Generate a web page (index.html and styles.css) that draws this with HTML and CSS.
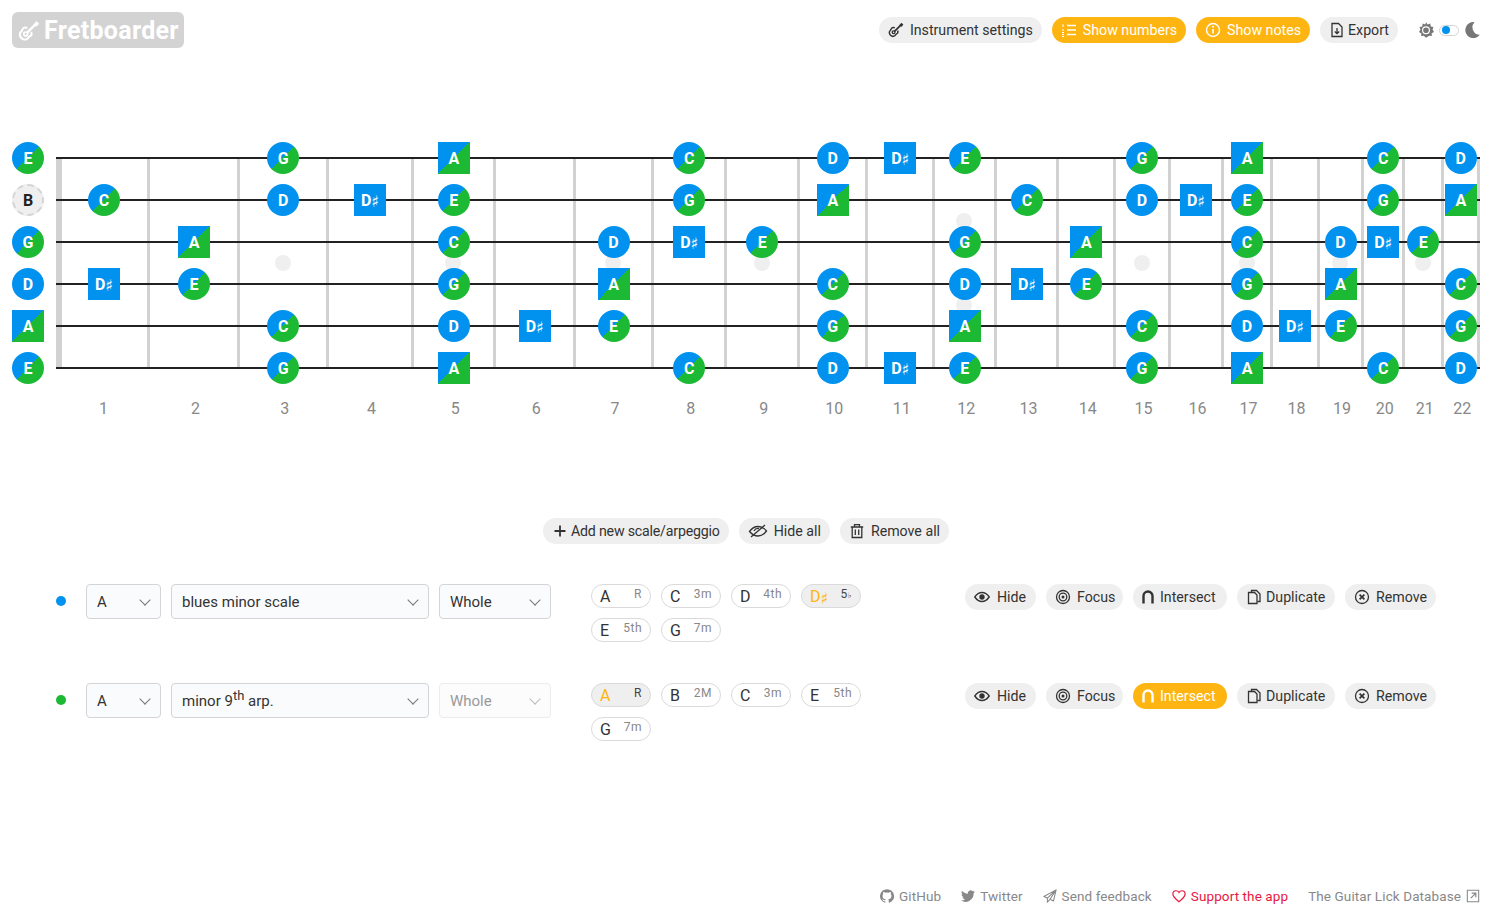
FILE: index.html
```html
<!DOCTYPE html>
<html lang="en">
<head>
    <meta charset="UTF-8">
    <meta name="viewport" content="width=device-width, initial-scale=1.0">
    <title>Fretboarder</title>
    <link rel="stylesheet" href="styles.css">
</head>

<body>
    <!-- Icon sprite -->
    <svg class="sprite" xmlns="http://www.w3.org/2000/svg">
        <symbol id="i-guitar" viewBox="0 0 16 16">
            <path d="M6.800 5.800C5.300 5.200 3.700 5.700 3.100 7c-.3.6-.2 1.100-.8 1.500C1 9.500 1 11.500 2.300 12.900c1.400 1.500 3.400 1.800 4.700.6.500-.5.600-1.100 1.300-1.400 1.300-.6 1.900-2.100 1.300-3.500" fill="none" stroke="currentColor" stroke-width="1.500"/>
            <circle cx="5.600" cy="10.200" r="1.400" fill="none" stroke="currentColor" stroke-width="1.300"/>
            <path d="M6.500 9.400l6-6" stroke="currentColor" stroke-width="1.700"/>
            <path d="M11.300 3l2.200-2.200 1.900 1.900-2.200 2.200z" fill="currentColor"/>
        </symbol>
        <symbol id="i-list" viewBox="0 0 16 16">
            <path d="M6 3.500h9M6 8h9M6 12.500h9" stroke="currentColor" stroke-width="1.300" fill="none"/>
            <path d="M2 2v3M1 8h2M1 10.500h2M1 12.500h2M1 14.500h2" stroke="currentColor" stroke-width="1" fill="none"/>
        </symbol>
        <symbol id="i-info" viewBox="0 0 16 16">
            <circle cx="8" cy="8" r="6.500" fill="none" stroke="currentColor" stroke-width="1.400"/>
            <path d="M8 7v4.500" stroke="currentColor" stroke-width="1.600"/>
            <circle cx="8" cy="4.800" r="1" fill="currentColor"/>
        </symbol>
        <symbol id="i-export" viewBox="0 0 16 16">
            <path d="M3 1.500h6.500l3.500 3.500v9.500H3z" fill="none" stroke="currentColor" stroke-width="1.300"/>
            <path d="M8 6v5.500M5.800 9.500L8 11.700l2.200-2.200" fill="none" stroke="currentColor" stroke-width="1.300"/>
        </symbol>
        <symbol id="i-sun" viewBox="0 0 16 16">
            <path d="M8 .2l1.700 2.300 2.700-.9.300 2.800 2.800.5-1 2.600L16 10l-2.400 1.300.3 2.700-2.700-.3L8 15.800l-2.200-2-2.700.3.300-2.700L1 10l1.500-2.500-1-2.600 2.800-.5.300-2.800 2.700.9z" fill="currentColor"/>
            <circle cx="8" cy="8.200" r="4" fill="#fff"/>
            <circle cx="8" cy="8.200" r="2.800" fill="currentColor"/>
        </symbol>
        <symbol id="i-moon" viewBox="0 0 16 16">
            <path d="M10.500.2A8 8 0 1 0 15.800 12.800 7.500 7.500 0 0 1 10.500.2z" fill="currentColor"/>
        </symbol>
        <symbol id="i-plus" viewBox="0 0 16 16">
            <path d="M8 2.500v11M2.500 8h11" stroke="currentColor" stroke-width="1.800" fill="none"/>
        </symbol>
        <symbol id="i-eye-off" viewBox="0 0 20 16">
            <path d="M1.500 8.500C4 5 7 3.500 10 3.500s6 1.500 8.500 4.500C16 11.500 13 13 10 13s-6-1.500-8.500-4.500z" fill="none" stroke="currentColor" stroke-width="1.300"/>
            <path d="M6 8c1-2 3-3 5-2.500M3 14L17 2" fill="none" stroke="currentColor" stroke-width="1.300"/>
        </symbol>
        <symbol id="i-trash" viewBox="0 0 16 16">
            <path d="M1.800 4h12.400M5.500 4V1.700h5V4M3.200 4v10.500h9.600V4M6.300 6.500v5.500M9.700 6.500v5.500" fill="none" stroke="currentColor" stroke-width="1.300"/>
        </symbol>
        <symbol id="i-eye" viewBox="0 0 16 16">
            <path d="M.8 8C2.800 5 5.300 3.500 8 3.500s5.200 1.500 7.200 4.500c-2 3-4.500 4.500-7.200 4.500S2.800 11 .8 8z" fill="none" stroke="currentColor" stroke-width="1.400"/>
            <circle cx="8" cy="8" r="2.700" fill="currentColor"/>
        </symbol>
        <symbol id="i-focus" viewBox="0 0 16 16">
            <circle cx="8" cy="8" r="6.500" fill="none" stroke="currentColor" stroke-width="1.300"/>
            <circle cx="8" cy="8" r="3.800" fill="none" stroke="currentColor" stroke-width="1.300"/>
            <circle cx="8" cy="8" r="1.500" fill="currentColor"/>
        </symbol>
        <symbol id="i-intersect" viewBox="0 0 16 16">
            <path d="M3.500 14.500V7a4.500 4.500 0 0 1 9 0v7.500" fill="none" stroke="currentColor" stroke-width="2.400"/>
        </symbol>
        <symbol id="i-duplicate" viewBox="0 0 16 16">
            <path d="M5.500 3.500V1.500h5l3.500 3.500v7.500h-2.500" fill="none" stroke="currentColor" stroke-width="1.300"/>
            <path d="M2.500 3.500h6l2.500 2.500v8.500H2.500z" fill="none" stroke="currentColor" stroke-width="1.300"/>
        </symbol>
        <symbol id="i-remove" viewBox="0 0 16 16">
            <circle cx="8" cy="8" r="6.500" fill="none" stroke="currentColor" stroke-width="1.300"/>
            <path d="M5.600 5.600l4.800 4.800M10.400 5.600l-4.800 4.800" stroke="currentColor" stroke-width="1.700"/>
        </symbol>
        <symbol id="i-github" viewBox="0 0 16 16">
            <path d="M8 .2a8 8 0 0 0-2.500 15.600c.4.100.5-.2.500-.4v-1.400c-2.200.5-2.700-1-2.700-1-.4-.9-.9-1.200-.9-1.200-.7-.5.100-.5.100-.5.800.1 1.200.8 1.200.8.700 1.200 1.900.9 2.300.7.100-.5.300-.9.500-1.100-1.800-.2-3.600-.9-3.600-4 0-.9.300-1.600.8-2.100-.1-.2-.4-1 .1-2.100 0 0 .7-.2 2.200.8a7.600 7.600 0 0 1 4 0c1.500-1 2.200-.8 2.200-.8.400 1.100.200 1.900.1 2.100.500.500.8 1.200.8 2.100 0 3.100-1.900 3.800-3.700 4 .3.300.6.700.6 1.500v2.200c0 .2.100.5.600.4A8 8 0 0 0 8 .2z" fill="currentColor"/>
        </symbol>
        <symbol id="i-twitter" viewBox="0 0 16 16">
            <path d="M16 3c-.6.300-1.200.4-1.900.5.700-.4 1.200-1 1.400-1.800-.6.400-1.300.6-2.100.8a3.300 3.300 0 0 0-5.600 3C5.100 5.400 2.700 4.100 1.100 2.100c-.9 1.500-.4 3.400 1 4.400-.5 0-1-.2-1.500-.4 0 1.600 1.100 3 2.600 3.300-.5.100-1 .2-1.500.1.400 1.300 1.600 2.200 3 2.300A6.600 6.600 0 0 1 0 13.100 9.300 9.300 0 0 0 14.400 4.800c.6-.5 1.200-1.100 1.600-1.800z" fill="currentColor"/>
        </symbol>
        <symbol id="i-send" viewBox="0 0 16 16">
            <path d="M15 1L1 8.500l4 1.800L15 1l-7 10.800 4 1.900zM5 10.300v4.700l3-3.200" fill="none" stroke="currentColor" stroke-width="1.200" stroke-linejoin="round"/>
        </symbol>
        <symbol id="i-heart" viewBox="0 0 16 16">
            <path d="M8 14.500C3.500 11 1 8.500 1 5.700 1 3.500 2.700 2 4.600 2 6 2 7.300 2.800 8 4c.7-1.200 2-2 3.400-2C13.300 2 15 3.500 15 5.700c0 2.800-2.500 5.300-7 8.800z" fill="none" stroke="currentColor" stroke-width="1.400"/>
        </symbol>
        <symbol id="i-external" viewBox="0 0 16 16">
            <path d="M1.500 1.500h13v13h-13z" fill="none" stroke="currentColor" stroke-width="1.200"/>
            <path d="M5.500 10.500l5.500-5.500M6.500 4.800h4.700v4.700" fill="none" stroke="currentColor" stroke-width="1.400"/>
        </symbol>
    </svg>

    <header class="top-bar">
        <a class="logo" href="#"><svg class="logo-icon"><use href="#i-guitar"></use></svg>Fretboarder</a>
        <nav class="top-actions">
            <button class="pill"><svg class="icon"><use href="#i-guitar"></use></svg>Instrument settings</button>
            <button class="pill on"><svg class="icon"><use href="#i-list"></use></svg>Show numbers</button>
            <button class="pill on"><svg class="icon"><use href="#i-info"></use></svg>Show notes</button>
            <button class="pill export"><svg class="icon"><use href="#i-export"></use></svg>Export</button>
            <div class="theme-switch">
                <svg class="icon"><use href="#i-sun"></use></svg>
                <span class="toggle"><span class="knob"></span></span>
                <svg class="icon"><use href="#i-moon"></use></svg>
            </div>
        </nav>
    </header>

    <main>
        <!-- Fretboard -->
        <section class="fretboard">
            <div class="frets">
                <div class="fret nut"></div>
                <div class="fret"></div>
                <div class="fret"><i class="dot"></i></div>
                <div class="fret"></div>
                <div class="fret"><i class="dot"></i></div>
                <div class="fret"></div>
                <div class="fret"><i class="dot"></i></div>
                <div class="fret"></div>
                <div class="fret"><i class="dot"></i></div>
                <div class="fret"></div>
                <div class="fret"></div>
                <div class="fret double"><i class="dot"></i><i class="dot"></i></div>
                <div class="fret"></div>
                <div class="fret"></div>
                <div class="fret"><i class="dot"></i></div>
                <div class="fret"></div>
                <div class="fret"><i class="dot"></i></div>
                <div class="fret"></div>
                <div class="fret"><i class="dot"></i></div>
                <div class="fret"></div>
                <div class="fret"><i class="dot"></i></div>
                <div class="fret"></div>
            </div>

            <div class="string">
                <div class="cell"><span class="note both">E</span></div>
                <div class="cell"></div><div class="cell"></div>
                <div class="cell"><span class="note both">G</span></div>
                <div class="cell"></div>
                <div class="cell"><span class="note both root">A</span></div>
                <div class="cell"></div><div class="cell"></div>
                <div class="cell"><span class="note both">C</span></div>
                <div class="cell"></div>
                <div class="cell"><span class="note">D</span></div>
                <div class="cell"><span class="note root">D<b class="sharp">♯</b></span></div>
                <div class="cell"><span class="note both">E</span></div>
                <div class="cell"></div><div class="cell"></div>
                <div class="cell"><span class="note both">G</span></div>
                <div class="cell"></div>
                <div class="cell"><span class="note both root">A</span></div>
                <div class="cell"></div><div class="cell"></div>
                <div class="cell"><span class="note both">C</span></div>
                <div class="cell"></div>
                <div class="cell"><span class="note">D</span></div>
            </div>
            <div class="string">
                <div class="cell"><span class="note muted">B</span></div>
                <div class="cell"><span class="note both">C</span></div>
                <div class="cell"></div>
                <div class="cell"><span class="note">D</span></div>
                <div class="cell"><span class="note root">D<b class="sharp">♯</b></span></div>
                <div class="cell"><span class="note both">E</span></div>
                <div class="cell"></div><div class="cell"></div>
                <div class="cell"><span class="note both">G</span></div>
                <div class="cell"></div>
                <div class="cell"><span class="note both root">A</span></div>
                <div class="cell"></div><div class="cell"></div>
                <div class="cell"><span class="note both">C</span></div>
                <div class="cell"></div>
                <div class="cell"><span class="note">D</span></div>
                <div class="cell"><span class="note root">D<b class="sharp">♯</b></span></div>
                <div class="cell"><span class="note both">E</span></div>
                <div class="cell"></div><div class="cell"></div>
                <div class="cell"><span class="note both">G</span></div>
                <div class="cell"></div>
                <div class="cell"><span class="note both root">A</span></div>
            </div>
            <div class="string">
                <div class="cell"><span class="note both">G</span></div>
                <div class="cell"></div>
                <div class="cell"><span class="note both root">A</span></div>
                <div class="cell"></div><div class="cell"></div>
                <div class="cell"><span class="note both">C</span></div>
                <div class="cell"></div>
                <div class="cell"><span class="note">D</span></div>
                <div class="cell"><span class="note root">D<b class="sharp">♯</b></span></div>
                <div class="cell"><span class="note both">E</span></div>
                <div class="cell"></div><div class="cell"></div>
                <div class="cell"><span class="note both">G</span></div>
                <div class="cell"></div>
                <div class="cell"><span class="note both root">A</span></div>
                <div class="cell"></div><div class="cell"></div>
                <div class="cell"><span class="note both">C</span></div>
                <div class="cell"></div>
                <div class="cell"><span class="note">D</span></div>
                <div class="cell"><span class="note root">D<b class="sharp">♯</b></span></div>
                <div class="cell"><span class="note both">E</span></div>
                <div class="cell"></div>
            </div>
            <div class="string">
                <div class="cell"><span class="note">D</span></div>
                <div class="cell"><span class="note root">D<b class="sharp">♯</b></span></div>
                <div class="cell"><span class="note both">E</span></div>
                <div class="cell"></div><div class="cell"></div>
                <div class="cell"><span class="note both">G</span></div>
                <div class="cell"></div>
                <div class="cell"><span class="note both root">A</span></div>
                <div class="cell"></div><div class="cell"></div>
                <div class="cell"><span class="note both">C</span></div>
                <div class="cell"></div>
                <div class="cell"><span class="note">D</span></div>
                <div class="cell"><span class="note root">D<b class="sharp">♯</b></span></div>
                <div class="cell"><span class="note both">E</span></div>
                <div class="cell"></div><div class="cell"></div>
                <div class="cell"><span class="note both">G</span></div>
                <div class="cell"></div>
                <div class="cell"><span class="note both root">A</span></div>
                <div class="cell"></div><div class="cell"></div>
                <div class="cell"><span class="note both">C</span></div>
            </div>
            <div class="string">
                <div class="cell"><span class="note both root">A</span></div>
                <div class="cell"></div><div class="cell"></div>
                <div class="cell"><span class="note both">C</span></div>
                <div class="cell"></div>
                <div class="cell"><span class="note">D</span></div>
                <div class="cell"><span class="note root">D<b class="sharp">♯</b></span></div>
                <div class="cell"><span class="note both">E</span></div>
                <div class="cell"></div><div class="cell"></div>
                <div class="cell"><span class="note both">G</span></div>
                <div class="cell"></div>
                <div class="cell"><span class="note both root">A</span></div>
                <div class="cell"></div><div class="cell"></div>
                <div class="cell"><span class="note both">C</span></div>
                <div class="cell"></div>
                <div class="cell"><span class="note">D</span></div>
                <div class="cell"><span class="note root">D<b class="sharp">♯</b></span></div>
                <div class="cell"><span class="note both">E</span></div>
                <div class="cell"></div><div class="cell"></div>
                <div class="cell"><span class="note both">G</span></div>
            </div>
            <div class="string">
                <div class="cell"><span class="note both">E</span></div>
                <div class="cell"></div><div class="cell"></div>
                <div class="cell"><span class="note both">G</span></div>
                <div class="cell"></div>
                <div class="cell"><span class="note both root">A</span></div>
                <div class="cell"></div><div class="cell"></div>
                <div class="cell"><span class="note both">C</span></div>
                <div class="cell"></div>
                <div class="cell"><span class="note">D</span></div>
                <div class="cell"><span class="note root">D<b class="sharp">♯</b></span></div>
                <div class="cell"><span class="note both">E</span></div>
                <div class="cell"></div><div class="cell"></div>
                <div class="cell"><span class="note both">G</span></div>
                <div class="cell"></div>
                <div class="cell"><span class="note both root">A</span></div>
                <div class="cell"></div><div class="cell"></div>
                <div class="cell"><span class="note both">C</span></div>
                <div class="cell"></div>
                <div class="cell"><span class="note">D</span></div>
            </div>

            <div class="fret-numbers">
                <span></span><span>1</span><span>2</span><span>3</span><span>4</span><span>5</span><span>6</span><span>7</span><span>8</span><span>9</span><span>10</span><span>11</span><span>12</span><span>13</span><span>14</span><span>15</span><span>16</span><span>17</span><span>18</span><span>19</span><span>20</span><span>21</span><span>22</span>
            </div>
        </section>

        <!-- Scale controls -->
        <section class="scale-actions">
            <button class="pill add-new"><svg class="icon"><use href="#i-plus"></use></svg>Add new scale/arpeggio</button>
            <button class="pill"><svg class="icon wide"><use href="#i-eye-off"></use></svg>Hide all</button>
            <button class="pill"><svg class="icon"><use href="#i-trash"></use></svg>Remove all</button>
        </section>

        <section class="scales">
            <div class="scale">
                <span class="scale-dot"></span>
                <div class="select root-select"><span>A</span><i class="chevron"></i></div>
                <div class="select type-select"><span>blues minor scale</span><i class="chevron"></i></div>
                <div class="select pos-select"><span>Whole</span><i class="chevron"></i></div>
                <div class="intervals">
                    <div class="interval"><span class="name">A</span><span class="degree">R</span></div>
                    <div class="interval"><span class="name">C</span><span class="degree">3m</span></div>
                    <div class="interval"><span class="name">D</span><span class="degree">4th</span></div>
                    <div class="interval active"><span class="name">D<b class="sharp">♯</b></span><span class="degree">5<b class="flat">♭</b></span></div>
                    <div class="interval"><span class="name">E</span><span class="degree">5th</span></div>
                    <div class="interval"><span class="name">G</span><span class="degree">7m</span></div>
                </div>
                <div class="scale-buttons">
                    <button class="pill"><svg class="icon"><use href="#i-eye"></use></svg>Hide</button>
                    <button class="pill"><svg class="icon"><use href="#i-focus"></use></svg>Focus</button>
                    <button class="pill"><svg class="icon"><use href="#i-intersect"></use></svg>Intersect</button>
                    <button class="pill"><svg class="icon"><use href="#i-duplicate"></use></svg>Duplicate</button>
                    <button class="pill"><svg class="icon"><use href="#i-remove"></use></svg>Remove</button>
                </div>
            </div>

            <div class="scale">
                <span class="scale-dot green"></span>
                <div class="select root-select"><span>A</span><i class="chevron"></i></div>
                <div class="select type-select"><span>minor 9<sup>th</sup> arp.</span><i class="chevron"></i></div>
                <div class="select pos-select disabled"><span>Whole</span><i class="chevron"></i></div>
                <div class="intervals">
                    <div class="interval active"><span class="name">A</span><span class="degree">R</span></div>
                    <div class="interval"><span class="name">B</span><span class="degree">2M</span></div>
                    <div class="interval"><span class="name">C</span><span class="degree">3m</span></div>
                    <div class="interval"><span class="name">E</span><span class="degree">5th</span></div>
                    <div class="interval"><span class="name">G</span><span class="degree">7m</span></div>
                </div>
                <div class="scale-buttons">
                    <button class="pill"><svg class="icon"><use href="#i-eye"></use></svg>Hide</button>
                    <button class="pill"><svg class="icon"><use href="#i-focus"></use></svg>Focus</button>
                    <button class="pill on"><svg class="icon"><use href="#i-intersect"></use></svg>Intersect</button>
                    <button class="pill"><svg class="icon"><use href="#i-duplicate"></use></svg>Duplicate</button>
                    <button class="pill"><svg class="icon"><use href="#i-remove"></use></svg>Remove</button>
                </div>
            </div>
        </section>
    </main>

    <footer class="links">
        <a href="#"><svg class="icon"><use href="#i-github"></use></svg>GitHub</a>
        <a href="#"><svg class="icon"><use href="#i-twitter"></use></svg>Twitter</a>
        <a href="#"><svg class="icon"><use href="#i-send"></use></svg>Send feedback</a>
        <a href="#" class="support"><svg class="icon"><use href="#i-heart"></use></svg>Support the app</a>
        <a href="#">The Guitar Lick Database<svg class="icon"><use href="#i-external"></use></svg></a>
    </footer>
</body>
</html>
```

FILE: styles.css
```css
* {
    box-sizing: border-box;
}

html, body {
    height: 100%;
}

body {
    margin: 0;
    padding: 12px 12px 0;
    display: flex;
    flex-direction: column;
    overflow: hidden;
    background-color: #fff;
    color: #333;
    font-family: Roboto, "Noto Sans", Arial, sans-serif;
    font-size: 15px;
}

.sprite {
    display: none;
}

main {
    flex: 1;
}

/* Header */
.top-bar {
    display: flex;
    align-items: center;
    justify-content: space-between;
    height: 36px;
}

.logo {
    display: flex;
    align-items: center;
    gap: 4px;
    width: 172px;
    height: 36px;
    padding: 1px 0 0 6px;
    background-color: #d3d3d3;
    border-radius: 6px;
    color: #fff;
    font-size: 25px;
    font-weight: 700;
    letter-spacing: 0.3px;
    text-decoration: none;
}

.logo-icon {
    width: 22px;
    height: 22px;
}

.top-actions {
    display: flex;
    align-items: center;
    gap: 10px;
}

.pill {
    display: flex;
    flex: none;
    align-items: center;
    gap: 6px;
    height: 26px;
    padding: 0 9px;
    border: 0;
    border-radius: 13px;
    background-color: #efefef;
    color: #333;
    font-family: inherit;
    font-size: 14.2px;
    white-space: nowrap;
}

.pill.on {
    background-color: #ffb511;
    color: #fff;
}

.pill.export {
    gap: 3px;
}

.icon {
    flex: none;
    width: 16px;
    height: 16px;
}

.icon.wide {
    width: 20px;
}

.theme-switch {
    display: flex;
    align-items: center;
    gap: 5px;
    margin-left: 10px;
    color: #777;
}

.toggle {
    display: flex;
    align-items: center;
    width: 20px;
    height: 11px;
    padding-left: 2px;
    border: 1.5px solid #d4d4d4;
    border-radius: 6px;
}

.knob {
    width: 8px;
    height: 8px;
    border-radius: 50%;
    background-color: #0092ee;
}

/* Fretboard */
.fretboard {
    --frets: 94px 90px 88.5px 85px 82.5px 79.5px 78px 73.5px 72.5px 68.5px 66.5px 62.5px 62px 56.5px 55px 53px 49px 47px 44px 41.5px 38.5px 36.5px;
    position: relative;
    margin-top: 89px;
}

.frets {
    position: absolute;
    top: 21px;
    left: 44px;
    display: grid;
    grid-template-columns: var(--frets);
    height: 210px;
}

.fret {
    display: flex;
    align-items: center;
    justify-content: center;
    border-right: 3px solid #d2d2d2;
}

.fret.nut {
    border-left: 6px solid #d2d2d2;
}

.fret.double {
    flex-direction: column;
    gap: 68px;
}

.dot {
    width: 16px;
    height: 16px;
    border-radius: 50%;
    background-color: #efefef;
}

.string {
    position: relative;
    display: grid;
    grid-template-columns: 44px var(--frets);
    height: 42px;
}

.string::before {
    content: "";
    position: absolute;
    top: 20px;
    left: 44px;
    right: 0;
    height: 2px;
    background-color: #222;
}

.cell {
    position: relative;
    display: flex;
    align-items: center;
    justify-content: center;
    padding-right: 2px;
}

.cell:first-child {
    justify-content: flex-start;
}

.cell:nth-child(2) {
    padding-left: 4px;
}

.note {
    display: flex;
    flex: none;
    align-items: center;
    justify-content: center;
    width: 32px;
    height: 32px;
    border-radius: 50%;
    background-color: #0092ee;
    color: #fff;
    font-size: 16px;
    font-weight: 700;
}

.note.root {
    border-radius: 0;
}

.note.both {
    background: linear-gradient(135deg, #0092ee 50%, #1cb935 50%);
}

.note.muted {
    background-color: #efefef;
    border: 2px dashed #d4d4d4;
    color: #222;
}

.sharp {
    position: relative;
    top: 2px;
    font-family: "DejaVu Sans", sans-serif;
    font-size: 16px;
    line-height: 0;
}

.fret-numbers {
    display: grid;
    grid-template-columns: 44px var(--frets);
    height: 38px;
    align-items: center;
    color: #888;
    font-size: 16px;
    text-align: center;
}

.fret-numbers span {
    padding-left: 1px;
}

/* Scale list */
.scale-actions {
    display: flex;
    justify-content: center;
    gap: 10px;
    margin-top: 91px;
}

.pill.add-new {
    gap: 3px;
    letter-spacing: -0.2px;
}

.scales {
    display: flex;
    flex-direction: column;
    gap: 40px;
    margin-top: 40px;
    padding: 0 44px;
}

.scale {
    display: flex;
    align-items: flex-start;
    height: 59px;
}

.scale-dot {
    flex: none;
    width: 10px;
    height: 10px;
    margin: 12px 20px 0 0;
    border-radius: 50%;
    background-color: #0092ee;
}

.scale-dot.green {
    background-color: #1cb935;
}

.select {
    display: flex;
    align-items: center;
    justify-content: space-between;
    height: 35px;
    padding: 0 11px 0 10px;
    margin-right: 10px;
    border: 1.5px solid #d4d4d6;
    border-radius: 4px;
    background-color: #fafbfd;
    font-size: 15px;
}

.select sup {
    font-size: 13px;
    line-height: 0;
}

.root-select {
    width: 75px;
}

.type-select {
    width: 258px;
}

.pos-select {
    width: 112px;
    margin-right: 40px;
}

.select.disabled {
    border-color: #ececec;
    background-color: #fcfcfc;
    color: #999;
}

.chevron {
    width: 8px;
    height: 8px;
    margin-top: -3px;
    border-right: 1.3px solid #777;
    border-bottom: 1.3px solid #777;
    transform: rotate(45deg);
}

.disabled .chevron {
    border-color: #bbb;
}

.intervals {
    display: grid;
    grid-template-columns: repeat(4, 60px);
    gap: 10px;
    width: 270px;
}

.interval {
    display: flex;
    justify-content: space-between;
    height: 24px;
    padding: 0 8px;
    border: 1.5px solid #dadada;
    border-radius: 12px;
    background-color: #fff;
}

.interval .name {
    font-size: 16px;
    line-height: 23px;
}

.interval .degree {
    color: #888;
    font-size: 12px;
    letter-spacing: 0.5px;
    line-height: 18px;
}

.interval.active {
    background-color: #efefef;
}

.interval.active .name {
    color: #ffb511;
}

.interval.active .degree {
    color: #444;
}

.flat {
    font-family: "DejaVu Sans", sans-serif;
    font-size: 8px;
    font-weight: 400;
}

.scale-buttons {
    display: flex;
    gap: 10px;
    margin-left: auto;
}

.scale-buttons .pill:nth-child(1) {
    gap: 7px;
    width: 71px;
}

.scale-buttons .pill:nth-child(2) {
    gap: 6px;
    width: 77px;
}

.scale-buttons .pill:nth-child(3) {
    gap: 4px;
    width: 94px;
    padding-left: 7px;
}

.scale-buttons .pill:nth-child(4) {
    gap: 4px;
    width: 98px;
}

.scale-buttons .pill:nth-child(5) {
    width: 91px;
}

/* Footer */
.links {
    display: flex;
    flex: none;
    justify-content: flex-end;
    gap: 20px;
    height: 28px;
    font-size: 13.5px;
    letter-spacing: 0.1px;
}

.links a {
    display: flex;
    align-items: center;
    gap: 5px;
    height: 16px;
    color: #888;
    text-decoration: none;
}

.links .icon {
    width: 14px;
    height: 14px;
}

.links a.support {
    color: #e8173f;
}
```
